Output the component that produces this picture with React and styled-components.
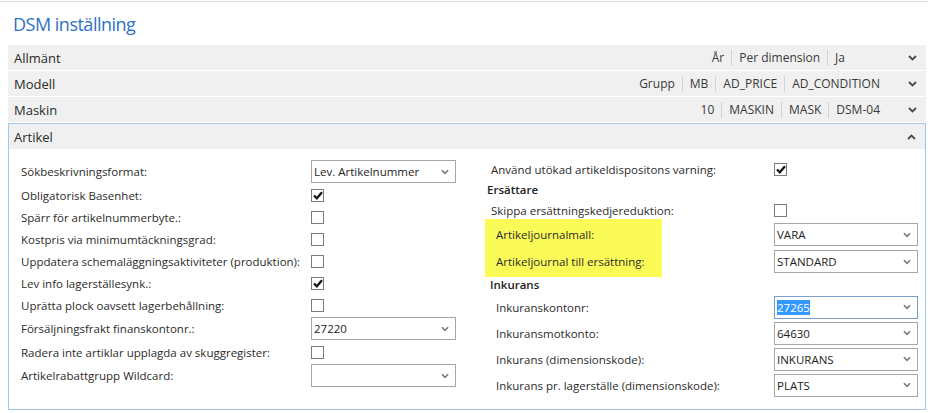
import React from "react";
import styled, { createGlobalStyle } from "styled-components";

const GlobalStyle = createGlobalStyle`
  body {
    margin: 0;
    background: #ffffff;
    font-family: "Open Sans", "Noto Sans", sans-serif;
    color: #2b2b2b;
  }
`;

const Page = styled.div`
  margin-top: 1px;
  border-top: 1px solid #d9d9d9;
  width: 928px;
`;

const Title = styled.h1`
  margin: 0;
  height: 43px;
  box-sizing: border-box;
  padding: 9px 0 0 13px;
  font-size: 18px;
  font-weight: 400;
  letter-spacing: -0.5px;
  line-height: 26px;
  color: #2d72c4;
`;

const Sections = styled.div`
  display: flex;
  flex-direction: column;
  gap: 1px;
  margin: 0 2px 0 8px;
`;

const Header = styled.div`
  display: flex;
  align-items: center;
  height: 25px;
  box-sizing: border-box;
  background: #f0f0f0;
  padding-left: ${(p) => (p.$open ? 5 : 6)}px;
  font-size: 13px;
  color: #2b2b2b;
`;

const HeaderTitle = styled.span`
  flex: 1;
`;

const Meta = styled.div`
  display: flex;
  align-items: center;
  font-size: 12px;
  color: #3a3a3a;
`;

const MetaItem = styled.span`
  min-width: ${(p) => (p.$empty ? 20 : 0)}px;
  padding: 0 7px;
  line-height: 16px;
  & + & {
    border-left: 1px solid #d2d2d2;
  }
`;

const Toggle = styled.span`
  display: flex;
  justify-content: flex-end;
  width: 39px;
  padding-right: 9px;
  box-sizing: border-box;
  color: #4a4a4a;
`;

const OpenSection = styled.div`
  border: 1px solid #a7c5ea;
`;

const Body = styled.div`
  display: grid;
  grid-template-columns: 435px 1fr;
  column-gap: 35px;
  padding: 10px 7px 11px 12px;
  font-size: 11.5px;
  color: #2b2b2b;
`;

const Column = styled.div`
  display: flex;
  flex-direction: column;
`;

const Row = styled.div`
  display: grid;
  grid-template-columns: ${(p) => p.$label - (p.$indent || 0)}px 1fr;
  align-items: center;
  height: ${(p) => p.$h}px;
  padding-left: ${(p) => p.$indent || 0}px;
`;

const Label = styled.span`
  white-space: nowrap;
`;

const GroupTitle = styled.div`
  height: 19px;
  line-height: 19px;
  font-weight: 600;
  margin-left: ${(p) => p.$shift}px;
  color: #222;
`;

const Highlight = styled.div`
  display: flex;
  flex-direction: column;
  margin: -2px 0 -2px -6px;
  padding: 2px 0 2px 6px;
  background: linear-gradient(#fbfb57, #fbfb57) no-repeat left top / 177px 100%;
`;

const SelectBox = styled.div`
  display: flex;
  align-items: center;
  height: 23px;
  box-sizing: border-box;
  border: 1px solid ${(p) => (p.$focus ? "#7a9cc6" : "#a6a6a6")};
  background: #fff;
  padding: 0 6px 0 2px;
  color: #222;
`;

const SelectValue = styled.span`
  flex: 1;
  span {
    background: #3399ff;
    color: #fff;
  }
`;

const Check = styled.div`
  width: 13px;
  height: 13px;
  box-sizing: border-box;
  border: 1px solid #7c7c7c;
  background: #fff;
  display: flex;
  align-items: center;
  justify-content: center;
`;

const Chevron = ({ up, color = "#4a4a4a", w = 9 }) => (
  <svg width={w} height="6" viewBox="0 0 9 6">
    <polyline
      points={up ? "1,5 4.5,1.5 8,5" : "1,1 4.5,4.5 8,1"}
      fill="none"
      stroke={color}
      strokeWidth="1.8"
    />
  </svg>
);

const CheckBox = ({ checked }) => (
  <Check>
    {checked && (
      <svg width="10" height="9" viewBox="0 0 10 9">
        <polyline points="1,4.5 3.8,7.3 9,1.2" fill="none" stroke="#111" strokeWidth="2.2" />
      </svg>
    )}
  </Check>
);

const Select = ({ value, focus }) => (
  <SelectBox $focus={focus}>
    <SelectValue>{focus ? <span>{value}</span> : value}</SelectValue>
    <Chevron color="#7a7a7a" w={8} />
  </SelectBox>
);

const collapsed = [
  { title: "Allmänt", meta: ["År", "Per dimension", "Ja", ""] },
  { title: "Modell", meta: ["Grupp", "MB", "AD_PRICE", "AD_CONDITION"] },
  { title: "Maskin", meta: ["10", "MASKIN", "MASK", "DSM-04"] },
];

const leftFields = [
  { label: "Sökbeskrivningsformat:", select: "Lev. Artikelnummer" },
  { label: "Obligatorisk Basenhet:", checked: true },
  { label: "Spärr för artikelnummerbyte.:" },
  { label: "Kostpris via minimumtäckningsgrad:" },
  { label: "Uppdatera schemaläggningsaktiviteter (produktion):" },
  { label: "Lev info lagerställesynk.:", checked: true },
  { label: "Uprätta plock oavsett lagerbehållning:" },
  { label: "Försäljningsfrakt finanskontonr.:", select: "27220" },
  { label: "Radera inte artiklar upplagda av skuggregister:" },
  { label: "Artikelrabattgrupp Wildcard:", select: "" },
];

const inkurans = [
  { label: "Inkuranskontonr:", select: "27265", focus: true },
  { label: "Inkuransmotkonto:", select: "64630" },
  { label: "Inkurans (dimensionskode):", select: "INKURANS" },
  { label: "Inkurans pr. lagerställe (dimensionskode):", select: "PLATS" },
];

const Field = ({ f, label, indent, selectH = 25, h = 22 }) => (
  <Row $label={label} $indent={indent} $h={f.select !== undefined ? selectH : h}>
    <Label>{f.label}</Label>
    {f.select !== undefined ? (
      <Select value={f.select} focus={f.focus} />
    ) : (
      <CheckBox checked={f.checked} />
    )}
  </Row>
);

export default function App() {
  return (
    <Page>
      <GlobalStyle />
      <Title>DSM inställning</Title>
      <Sections>
        {collapsed.map((s) => (
          <Header key={s.title}>
            <HeaderTitle>{s.title}</HeaderTitle>
            <Meta>
              {s.meta.map((m, i) => (
                <MetaItem key={i} $empty={m === ""}>
                  {m}
                </MetaItem>
              ))}
            </Meta>
            <Toggle>
              <Chevron />
            </Toggle>
          </Header>
        ))}
        <OpenSection>
          <Header $open>
            <HeaderTitle>Artikel</HeaderTitle>
            <Toggle>
              <Chevron up />
            </Toggle>
          </Header>
          <Body>
            <Column>
              {leftFields.map((f) => (
                <Field key={f.label} f={f} label={290} />
              ))}
            </Column>
            <Column>
              <Field f={{ label: "Använd utökad artikeldispositons varning:", checked: true }} label={283} h={21} />
              <GroupTitle $shift={-4}>Ersättare</GroupTitle>
              <Field f={{ label: "Skippa ersättningskedjereduktion:" }} label={283} />
              <Highlight>
                <Field f={{ label: "Artikeljournalmall:", select: "VARA" }} label={283} indent={5} selectH={27} />
                <Field f={{ label: "Artikeljournal till ersättning:", select: "STANDARD" }} label={283} indent={5} selectH={27} />
              </Highlight>
              <GroupTitle $shift={-1}>Inkurans</GroupTitle>
              {inkurans.map((f) => (
                <Field key={f.label} f={f} label={283} indent={5} selectH={26} />
              ))}
            </Column>
          </Body>
        </OpenSection>
      </Sections>
    </Page>
  );
}
